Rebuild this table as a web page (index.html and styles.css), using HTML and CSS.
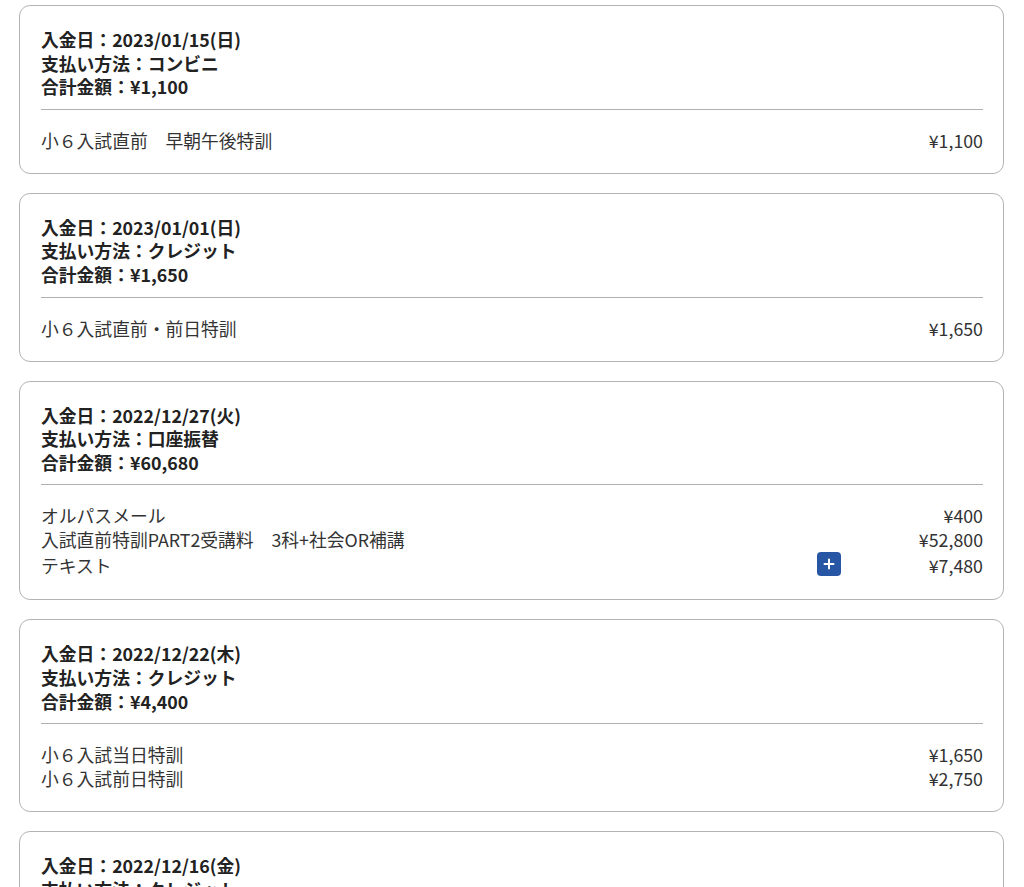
FILE: index.html
```html
<!DOCTYPE html>
<html lang="ja">
<head>
<meta charset="utf-8">
<link rel="stylesheet" href="styles.css">
</head>
<body>
<div class="list">
  <section class="card">
    <div class="head">
      <div>入金日：2023/01/15(日)</div>
      <div>支払い方法：コンビニ</div>
      <div>合計金額：¥1,100</div>
    </div>
    <div class="items">
      <div class="row"><span class="name">小６入試直前　早朝午後特訓</span><span class="price">¥1,100</span></div>
    </div>
  </section>
  <section class="card">
    <div class="head">
      <div>入金日：2023/01/01(日)</div>
      <div>支払い方法：クレジット</div>
      <div>合計金額：¥1,650</div>
    </div>
    <div class="items">
      <div class="row"><span class="name">小６入試直前・前日特訓</span><span class="price">¥1,650</span></div>
    </div>
  </section>
  <section class="card">
    <div class="head">
      <div>入金日：2022/12/27(火)</div>
      <div>支払い方法：口座振替</div>
      <div>合計金額：¥60,680</div>
    </div>
    <div class="items">
      <div class="row"><span class="name">オルパスメール</span><span class="price">¥400</span></div>
      <div class="row"><span class="name">入試直前特訓PART2受講料　3科+社会OR補講</span><span class="price">¥52,800</span></div>
      <div class="row"><span class="name">テキスト</span><span class="plus"><svg width="14" height="14" viewBox="0 0 14 14"><path d="M7 2.5v9M2.5 7h9" stroke="#fff" stroke-width="2" stroke-linecap="round"/></svg></span><span class="price">¥7,480</span></div>
    </div>
  </section>
  <section class="card">
    <div class="head">
      <div>入金日：2022/12/22(木)</div>
      <div>支払い方法：クレジット</div>
      <div>合計金額：¥4,400</div>
    </div>
    <div class="items">
      <div class="row"><span class="name">小６入試当日特訓</span><span class="price">¥1,650</span></div>
      <div class="row"><span class="name">小６入試前日特訓</span><span class="price">¥2,750</span></div>
    </div>
  </section>
  <section class="card">
    <div class="head">
      <div>入金日：2022/12/16(金)</div>
      <div>支払い方法：クレジット</div>
      <div>合計金額：¥1,650</div>
    </div>
    <div class="items">
      <div class="row"><span class="name">小６入試直前・前日特訓</span><span class="price">¥1,650</span></div>
    </div>
  </section>
</div>
</body>
</html>
```
FILE: styles.css
```css
html, body {
  margin: 0;
  padding: 0;
  background: #fff;
}
body {
  font-family: "Noto Sans CJK JP", "Noto Sans", sans-serif;
  font-size: 17.8px;
  line-height: 24px;
  color: #333;
}
.list {
  padding: 5px 20px 20px 19px;
  display: flex;
  flex-direction: column;
  gap: 19px;
}
.card {
  border: 1px solid #b4b4b4;
  border-radius: 11px;
  padding: 22px 20px 21px 21px;
}
.head {
  font-weight: 700;
  color: #222;
  line-height: 23.6px;
  padding-bottom: 10px;
  border-bottom: 1px solid #b0b0b0;
}
.items {
  padding-top: 18px;
}
.row {
  display: flex;
  align-items: center;
}
.name {
  flex: 1;
}
.price {
  width: 140px;
  text-align: right;
}
.plus {
  width: 24px;
  height: 24px;
  border-radius: 4px;
  background: #2756a5;
  display: flex;
  align-items: center;
  justify-content: center;
  margin: 1px 2px 2px 0;
}
```
